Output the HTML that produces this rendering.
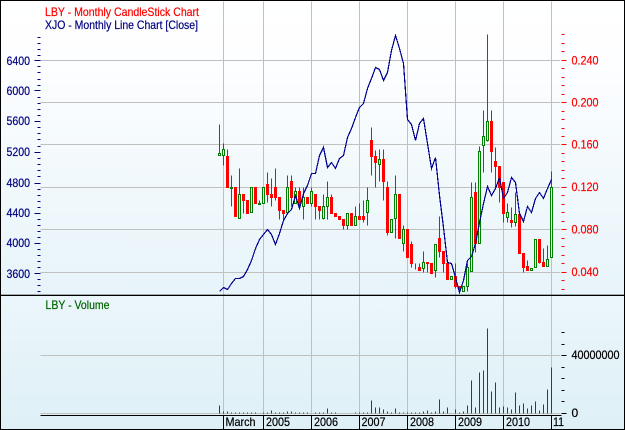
<!DOCTYPE html>
<html>
<head>
<meta charset="utf-8">
<style>
html,body{margin:0;padding:0;background:#fff;width:625px;height:430px;overflow:hidden}
svg{display:block}
text{font-family:"Liberation Sans",sans-serif;font-size:12px;stroke-width:.2;lengthAdjust:spacingAndGlyphs}
</style>
</head>
<body>
<svg width="625" height="430" viewBox="0 0 625 430" xmlns="http://www.w3.org/2000/svg">
<defs>
<linearGradient id="a" x1="0" y1="0" x2="0" y2="1"><stop offset="0" stop-color="#ffffff"/><stop offset=".2" stop-color="#fdfeff"/><stop offset="1" stop-color="#e7f4f9"/></linearGradient>
<linearGradient id="b" x1="0" y1="0" x2="0" y2="1"><stop offset="0" stop-color="#ebf6fb"/><stop offset="1" stop-color="#def0f6"/></linearGradient>
</defs>
<rect x="0" y="0" width="625" height="295" fill="url(#a)"/>
<rect x="0" y="295" width="625" height="135" fill="url(#b)"/>

<g transform="translate(.5,.5)" shape-rendering="crispEdges" fill="none" stroke-width="1">
<!-- grid -->
<path stroke="#c0c0c0" d="M223 1V415M263 1V415M311 1V415M359 1V415M407 1V415M455 1V415M503 1V415M551 1V415M40 60H560M40 102H560M40 144H560M40 187H560M40 229H560M40 272H560M40 355H560M40 413H560"/>
<!-- left ticks -->
<path stroke="#000080" d="M37 37H40M37 43H40M37 49H40M37 55H40M34 60H40M37 66H40M37 72H40M37 79H40M37 85H40M34 90H40M37 97H40M37 103H40M37 109H40M37 115H40M34 121H40M37 127H40M37 133H40M37 139H40M37 146H40M34 152H40M37 158H40M37 164H40M37 170H40M37 176H40M34 183H40M37 189H40M37 195H40M37 201H40M37 207H40M34 213H40M37 219H40M37 225H40M37 231H40M37 237H40M34 243H40M37 249H40M37 255H40M37 261H40M37 267H40M34 273H40M37 279H40M37 285H40M37 291H40"/>
<!-- right ticks -->
<path stroke="#ff0000" d="M561 34H564M561 43H564M561 51H564M561 60H566M561 68H564M561 77H564M561 85H564M561 94H564M561 102H566M561 111H564M561 119H564M561 128H564M561 136H564M561 144H566M561 153H564M561 161H564M561 170H564M561 178H564M561 187H566M561 195H564M561 204H564M561 212H564M561 221H564M561 229H566M561 238H564M561 246H564M561 255H564M561 263H564M561 272H566M561 280H564M561 289H564"/>
<!-- volume ticks -->
<path stroke="#000000" d="M561 332H564M561 344H564M561 355H566M561 367H564M561 378H564M561 390H564M561 401H564M561 413H566"/>
<!-- volume bars -->
<path stroke="#006400" d="M219 405V413M223 411V413M227 411V413M231 412V413M235 412V413M239 412V413M243 412V413M247 412V413M251 412V413M255 412V413M263 412V413M267 412V413M271 410V413M275 412V413M279 412V413M283 412V413M287 411V413M291 411V413M295 412V413M299 412V413M303 412V413M307 412V413M315 412V413M319 412V413M323 412V413M327 408V413M331 412V413M335 412V413M355 412V413M359 412V413M363 412V413M367 412V413M371 400V413M375 407V413M379 407V413M383 409V413M387 411V413M391 412V413M395 408V413M399 412V413M403 412V413M407 412V413M411 412V413M415 412V413M419 412V413M423 411V413M427 410V413M431 412V413M435 411V413M439 399V413M443 411V413M447 407V413M455 409V413M459 412V413M463 411V413M467 405V413M471 380V413M475 407V413M479 372V413M483 370V413M487 328V413M491 391V413M495 382V413M499 407V413M503 406V413M507 407V413M511 409V413M515 392V413M519 405V413M523 403V413M527 408V413M531 405V413M535 401V413M539 410V413M543 404V413M547 389V413M551 367V413"/>
<!-- wicks -->
<path stroke="#008000" d="M219 124V155M223 143V165M231 175V206M239 168V218M259 200V204M287 175V213M295 187V203M303 187V219M311 187V206M323 194V219M327 181V219M347 213V229M355 206V225M367 187V225M379 149V181M395 175V238M403 225V251M423 251V272M435 244V277M467 263V291M471 182V271M479 146V243M483 110V172M487 34V141M507 203V222M515 192V226M547 245V266M551 171V257"/>
<path stroke="#ff0000" d="M227 149V187M243 194V213M267 172V202M271 178V206M275 168V200M279 197V219M283 210V219M291 175V206M299 187V208M315 194V219M319 206V219M331 194V213M343 219V229M359 203V219M363 200V222M371 127V175M375 150V187M383 149V200M387 181V235M411 241V267M415 263V269M419 263V270M427 262V272M439 216V257M443 251V272M455 263V288M459 286V292M475 182V252M491 110V172M495 147V187M499 166V202M503 182V222M511 207V227M523 253V272M527 260V270M539 239V263M543 248V266"/>
<!-- green bodies -->
<path stroke="#008000" fill="#f1f9fc" d="M218 153h2v2h-2zM222 149h2v6h-2zM230 187h2v1h-2zM238 194h2v24h-2zM250 187h2v25h-2zM258 203h2v1h-2zM262 187h2v16h-2zM286 187h2v25h-2zM294 191h2v12h-2zM302 197h2v9h-2zM310 191h2v12h-2zM322 206h2v12h-2zM326 197h2v9h-2zM346 213h2v12h-2zM354 216h2v9h-2zM366 200h2v12h-2zM378 159h2v5h-2zM390 219h2v13h-2zM394 194h2v24h-2zM402 229h2v14h-2zM422 262h2v6h-2zM434 244h2v26h-2zM450 276h2v3h-2zM462 286h2v5h-2zM466 267h2v19h-2zM470 197h2v74h-2zM478 151h2v92h-2zM482 136h2v9h-2zM486 121h2v19h-2zM506 212h2v5h-2zM514 214h2v8h-2zM530 268h2v2h-2zM534 239h2v28h-2zM546 259h2v7h-2zM550 187h2v70h-2z"/>
<!-- red bodies -->
<path stroke="#ff0000" fill="#ff0000" d="M226 156h2v31h-2zM234 187h2v29h-2zM242 194h2v6h-2zM246 200h2v13h-2zM254 187h2v16h-2zM266 184h2v10h-2zM270 194h2v3h-2zM274 187h2v10h-2zM278 197h2v13h-2zM282 210h2v3h-2zM290 181h2v16h-2zM298 191h2v12h-2zM306 197h2v6h-2zM314 194h2v12h-2zM318 206h2v4h-2zM330 197h2v16h-2zM334 213h2v3h-2zM338 216h2v3h-2zM342 219h2v6h-2zM350 213h2v12h-2zM358 216h2v3h-2zM362 216h2v3h-2zM370 140h2v16h-2zM374 156h2v6h-2zM382 159h2v22h-2zM386 187h2v45h-2zM398 194h2v44h-2zM406 229h2v28h-2zM410 244h2v19h-2zM418 267h2v3h-2zM426 262h2v1h-2zM430 263h2v10h-2zM438 238h2v13h-2zM442 251h2v12h-2zM446 263h2v16h-2zM454 276h2v10h-2zM458 286h2v3h-2zM474 192h2v51h-2zM490 121h2v30h-2zM494 161h2v5h-2zM498 166h2v21h-2zM502 182h2v31h-2zM510 220h2v2h-2zM518 214h2v39h-2zM522 253h2v14h-2zM526 266h2v4h-2zM538 239h2v23h-2zM542 262h2v4h-2z"/>
<!-- XJO line -->
<polyline stroke="#000090" stroke-width="1.2" points="219,291 223,287 227,289 231,283 235,278 239,278 243,276 247,269 251,260 255,248 259,239 263,234 267,229 271,234 275,244 279,233 283,220 287,213 291,209 295,195 299,208 303,193 307,185 311,173 315,173 319,155 323,147 327,167 331,162 335,168 339,158 343,155 347,137 351,128 355,117 359,107 363,103 367,88 371,78 375,67 379,69 383,80 387,72 391,50 395,35 399,48 403,63 407,119 411,124 415,140 419,123 423,118 427,143 431,168 435,157 439,195 443,227 447,262 451,263 455,277 459,292 463,280 467,260 471,256 475,243 479,222 483,203 487,186 491,195 495,188 499,177 503,198 507,192 511,177 515,182 519,213 523,221 527,206 531,212 535,198 539,192 543,198 547,188 551,179"/>
<!-- axis + frame -->
<path stroke="#000000" d="M40 415H561M223 415V429M263 415V429M311 415V429M359 415V429M407 415V429M455 415V429M503 415V429M551 415V429"/>
<path stroke="#000000" d="M0 0H624V429H0ZM0 295H624"/>
</g>
<rect x="0" y="294.5" width="625" height="1" fill="#000" opacity=".6"/>

<text x="45" y="16" fill="#ff0000" stroke="#ff0000" textLength="154" lengthAdjust="spacingAndGlyphs">LBY - Monthly CandleStick Chart</text>
<text x="45" y="29" fill="#000080" stroke="#000080" textLength="153" lengthAdjust="spacingAndGlyphs">XJO - Monthly Line Chart [Close]</text>
<text x="45.5" y="309" fill="#006400" stroke="#006400" textLength="64" lengthAdjust="spacingAndGlyphs">LBY - Volume</text>

<g fill="#000080" stroke="#000080">
<text x="6.5" y="65" textLength="23.5" lengthAdjust="spacingAndGlyphs">6400</text>
<text x="6.5" y="95" textLength="23.5" lengthAdjust="spacingAndGlyphs">6000</text>
<text x="6.5" y="125" textLength="23.5" lengthAdjust="spacingAndGlyphs">5600</text>
<text x="6.5" y="156" textLength="23.5" lengthAdjust="spacingAndGlyphs">5200</text>
<text x="6.5" y="187" textLength="23.5" lengthAdjust="spacingAndGlyphs">4800</text>
<text x="6.5" y="217" textLength="23.5" lengthAdjust="spacingAndGlyphs">4400</text>
<text x="6.5" y="247" textLength="23.5" lengthAdjust="spacingAndGlyphs">4000</text>
<text x="6.5" y="278" textLength="23.5" lengthAdjust="spacingAndGlyphs">3600</text>
</g>
<g fill="#ff0000" stroke="#ff0000">
<text x="571.5" y="64.5" textLength="27" lengthAdjust="spacingAndGlyphs">0.240</text>
<text x="571.5" y="106.5" textLength="27" lengthAdjust="spacingAndGlyphs">0.200</text>
<text x="571.5" y="148.5" textLength="27" lengthAdjust="spacingAndGlyphs">0.160</text>
<text x="571.5" y="191" textLength="27" lengthAdjust="spacingAndGlyphs">0.120</text>
<text x="571.5" y="233.5" textLength="27" lengthAdjust="spacingAndGlyphs">0.080</text>
<text x="571.5" y="276" textLength="27" lengthAdjust="spacingAndGlyphs">0.040</text>
</g>
<g fill="#000000" stroke="#000000">
<text x="571.5" y="359" textLength="48" lengthAdjust="spacingAndGlyphs">40000000</text>
<text x="571.5" y="417">0</text>
<text x="225.5" y="426" textLength="30" lengthAdjust="spacingAndGlyphs">March</text>
<text x="266" y="426" textLength="24" lengthAdjust="spacingAndGlyphs">2005</text>
<text x="314" y="426" textLength="24" lengthAdjust="spacingAndGlyphs">2006</text>
<text x="361.5" y="426" textLength="24" lengthAdjust="spacingAndGlyphs">2007</text>
<text x="410" y="426" textLength="24" lengthAdjust="spacingAndGlyphs">2008</text>
<text x="458" y="426" textLength="24" lengthAdjust="spacingAndGlyphs">2009</text>
<text x="506" y="426" textLength="24" lengthAdjust="spacingAndGlyphs">2010</text>
<text x="553" y="426" textLength="11" lengthAdjust="spacingAndGlyphs">11</text>
</g>
</svg>
</body>
</html>
